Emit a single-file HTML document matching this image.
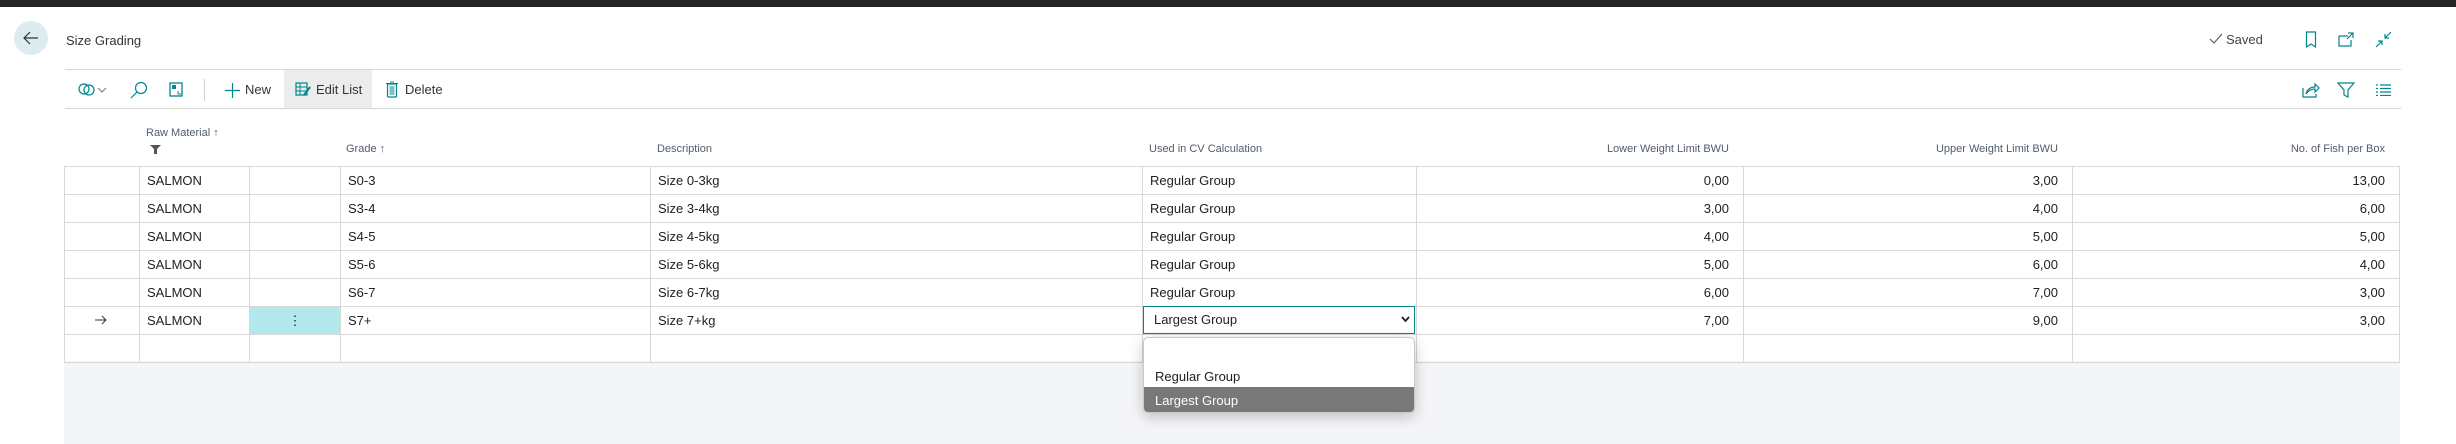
<!DOCTYPE html>
<html><head><meta charset="utf-8"><style>
*{margin:0;padding:0;box-sizing:border-box}
body{width:2456px;height:444px;background:#fff;position:relative;overflow:hidden;font-family:"Liberation Sans",sans-serif;color:#212121}
.a{position:absolute}
.t{font-size:13px;white-space:nowrap}
.h{font-size:11px;color:#505c6d;white-space:nowrap}
table{position:absolute;left:64px;top:166px;border-collapse:collapse;table-layout:fixed;font-size:13px}
td{height:28px;border:1px solid #d8d8d8;padding:0 7px;white-space:nowrap;overflow:hidden}
td.r{text-align:right;padding-right:14px}
svg{position:absolute}
</style></head><body>
<div class="a" style="left:0;top:0;width:2456px;height:7px;background:#262626"></div>
<div class="a" style="left:14px;top:21px;width:34px;height:34px;border-radius:50%;background:#dcecf0"></div>
<svg style="left:22px;top:30px" width="18" height="16" viewBox="0 0 18 16"><path d="M16 8H2M8 2L2 8l6 6" fill="none" stroke="#333" stroke-width="1.2"/></svg>
<div class="a t" style="left:66px;top:33px;color:#333">Size Grading</div>

<svg style="left:2209px;top:33px" width="14" height="12"><path d="M1 6l4 4 8-9" fill="none" stroke="#555" stroke-width="1.1"/></svg>
<div class="a t" style="left:2226px;top:32px;color:#444">Saved</div>
<svg style="left:2305px;top:31px" width="12" height="17"><path d="M1.5 1h9v15l-4.5-3-4.5 3z" fill="none" stroke="#00868b" stroke-width="1.2"/></svg>
<svg style="left:2338px;top:32px" width="17" height="15"><path d="M1 4h9M1 4v10h12V8M10 1h5v5M15 1l-6 6" fill="none" stroke="#00868b" stroke-width="1.2"/></svg>
<svg style="left:2375px;top:31px" width="17" height="17"><path d="M16 1l-6 6M10 3v4h4M1 16l6-6M3 10h4v4" fill="none" stroke="#00868b" stroke-width="1.2"/></svg>

<div class="a" style="left:65px;top:69px;width:2336px;height:1px;background:#d6d6d6"></div>
<div class="a" style="left:65px;top:108px;width:2336px;height:1px;background:#d6d6d6"></div>
<div class="a" style="left:284px;top:70px;width:88px;height:38px;background:#eaecee"></div>

<svg style="left:78px;top:82px" width="32" height="16"><circle cx="6" cy="7" r="5" fill="none" stroke="#00868b" stroke-width="1.2"/><circle cx="11" cy="8" r="5" fill="none" stroke="#00868b" stroke-width="1.2"/><path d="M20 6l4 4 4-4" fill="none" stroke="#777" stroke-width="1"/></svg>
<svg style="left:130px;top:81px" width="18" height="18"><circle cx="11" cy="7" r="5.5" fill="none" stroke="#00868b" stroke-width="1.2"/><path d="M7 11l-6 6" stroke="#00868b" stroke-width="1.2"/></svg>
<svg style="left:169px;top:82px" width="15" height="15"><rect x="1" y="1" width="12" height="13" fill="none" stroke="#00868b" stroke-width="1.3"/><rect x="3" y="3" width="4" height="4" fill="#00868b"/><path d="M9 9v3h3" fill="none" stroke="#00868b"/></svg>
<div class="a" style="left:204px;top:79px;width:1px;height:22px;background:#d0d0d0"></div>
<svg style="left:224px;top:82px" width="17" height="17"><path d="M8.5 1v15M1 8.5h15" stroke="#00868b" stroke-width="1.2"/></svg>
<div class="a t" style="left:245px;top:82px;color:#333">New</div>
<svg style="left:295px;top:82px" width="17" height="15"><rect x="1" y="1" width="11" height="12" fill="none" stroke="#00868b" stroke-width="1.2"/><path d="M1 5h11M1 9h11M5 1v12" stroke="#00868b"/><path d="M9 13l6-8" stroke="#00868b" stroke-width="2"/></svg>
<div class="a t" style="left:316px;top:82px;color:#333">Edit List</div>
<svg style="left:386px;top:81px" width="12" height="17"><rect x="1.5" y="3" width="9" height="13" rx="1" fill="none" stroke="#00868b" stroke-width="1.2"/><path d="M0 2.5h12M4 1h4" stroke="#00868b"/><rect x="3.5" y="5" width="5" height="9" fill="#00868b" opacity=".5"/></svg>
<div class="a t" style="left:405px;top:82px;color:#333">Delete</div>

<svg style="left:2302px;top:82px" width="18" height="16"><path d="M1 6v9h13v-3" fill="none" stroke="#00868b" stroke-width="1.2"/><path d="M4 12c1-5 5-7 9-7V2l4 4-4 4V7c-4 0-7 2-9 5z" fill="none" stroke="#00868b" stroke-width="1.2"/></svg>
<svg style="left:2337px;top:82px" width="18" height="16"><path d="M1 1h16l-6 7v7l-4-2V8z" fill="none" stroke="#00868b" stroke-width="1.2"/></svg>
<svg style="left:2376px;top:84px" width="15" height="12"><path d="M0 1h2M4 1h11M0 4.5h2M4 4.5h11M0 8h2M4 8h11M0 11.5h2M4 11.5h11" stroke="#00868b" stroke-width="1.2"/></svg>

<div class="a h" style="left:146px;top:127px">Raw Material ↑</div>
<svg style="left:150px;top:145px" width="11" height="9"><path d="M0 0h11L7 4v5H4V4z" fill="#555"/></svg>
<div class="a h" style="left:346px;top:143px">Grade ↑</div>
<div class="a h" style="left:657px;top:143px">Description</div>
<div class="a h" style="left:1149px;top:143px">Used in CV Calculation</div>
<div class="a h" style="left:1416px;top:143px;width:313px;text-align:right">Lower Weight Limit BWU</div>
<div class="a h" style="left:1743px;top:143px;width:315px;text-align:right">Upper Weight Limit BWU</div>
<div class="a h" style="left:2072px;top:143px;width:313px;text-align:right">No. of Fish per Box</div>

<div class="a" style="left:64px;top:361px;width:2336px;height:83px;background:#f4f5f7"></div>
<table>
<colgroup><col style="width:75px"><col style="width:110px"><col style="width:91px"><col style="width:310px"><col style="width:492px"><col style="width:274px"><col style="width:327px"><col style="width:329px"><col style="width:327px"></colgroup>
<tr><td></td><td>SALMON</td><td></td><td>S0-3</td><td>Size 0-3kg</td><td>Regular Group</td><td class="r">0,00</td><td class="r">3,00</td><td class="r">13,00</td></tr>
<tr><td></td><td>SALMON</td><td></td><td>S3-4</td><td>Size 3-4kg</td><td>Regular Group</td><td class="r">3,00</td><td class="r">4,00</td><td class="r">6,00</td></tr>
<tr><td></td><td>SALMON</td><td></td><td>S4-5</td><td>Size 4-5kg</td><td>Regular Group</td><td class="r">4,00</td><td class="r">5,00</td><td class="r">5,00</td></tr>
<tr><td></td><td>SALMON</td><td></td><td>S5-6</td><td>Size 5-6kg</td><td>Regular Group</td><td class="r">5,00</td><td class="r">6,00</td><td class="r">4,00</td></tr>
<tr><td></td><td>SALMON</td><td></td><td>S6-7</td><td>Size 6-7kg</td><td>Regular Group</td><td class="r">6,00</td><td class="r">7,00</td><td class="r">3,00</td></tr>
<tr><td></td><td>SALMON</td><td style="background:#b3e8ec;text-align:center">⋮</td><td>S7+</td><td>Size 7+kg</td><td></td><td class="r">7,00</td><td class="r">9,00</td><td class="r">3,00</td></tr>
<tr><td></td><td></td><td></td><td></td><td></td><td></td><td></td><td></td><td></td></tr>
</table>
<svg style="left:95px;top:315px" width="12" height="10"><path d="M0 5h11M7 1l4 4-4 4" fill="none" stroke="#333" stroke-width="1"/></svg>

<div class="a" style="left:1143px;top:306px;width:272px;height:28px;border:1px solid #00868b;background:#fff"></div>
<div class="a t" style="left:1154px;top:312px">Largest Group</div>
<svg style="left:1401px;top:316px" width="9" height="7"><path d="M1 1l3.5 4L8 1" fill="none" stroke="#222" stroke-width="1.8"/></svg>

<div class="a" style="left:1143px;top:337px;width:272px;height:76px;border:1px solid #c8c8c8;border-radius:5px;background:#fff;box-shadow:0 4px 14px rgba(0,0,0,.22);overflow:hidden">
<div class="a t" style="left:11px;top:31px">Regular Group</div>
<div class="a" style="left:0;top:49px;width:272px;height:27px;background:#787878"></div>
<div class="a t" style="left:11px;top:55px;color:#fff">Largest Group</div>
</div>
</body></html>
